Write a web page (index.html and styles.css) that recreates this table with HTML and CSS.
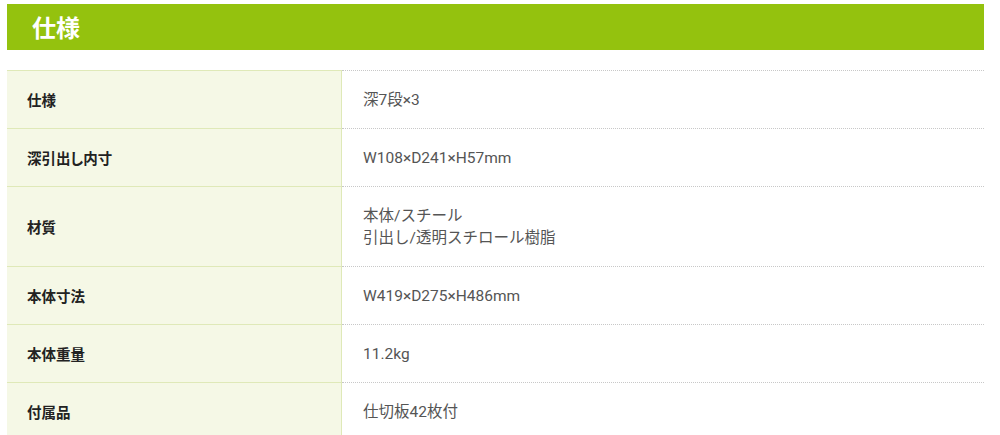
FILE: index.html
```html
<!DOCTYPE html>
<html lang="ja">
<head>
<meta charset="utf-8">
<link rel="stylesheet" href="styles.css">
</head>
<body>
<div class="wrap">
  <h2 class="title">仕様</h2>
  <table class="spec">
    <tr><th>仕様</th><td>深7段×3</td></tr>
    <tr><th>深引出し内寸</th><td>W108×D241×H57mm</td></tr>
    <tr><th>材質</th><td>本体/スチール<br>引出し/透明スチロール樹脂</td></tr>
    <tr><th>本体寸法</th><td>W419×D275×H486mm</td></tr>
    <tr><th>本体重量</th><td>11.2kg</td></tr>
    <tr><th>付属品</th><td>仕切板42枚付</td></tr>
  </table>
</div>
</body>
</html>
```
FILE: styles.css
```css
html, body { margin: 0; padding: 0; background: #fff; }
body { font-family: Roboto, "Noto Sans CJK JP", sans-serif; }
.wrap { padding: 4px 16px 0 7px; }
.title {
  margin: 0;
  height: 46px;
  background: #94c20e;
  color: #fff;
  font-family: "Noto Sans CJK JP", sans-serif;
  font-size: 24px;
  font-weight: 700;
  line-height: 46px;
  padding-left: 25px;
}
.spec {
  margin-top: 20px;
  width: 100%;
  border-collapse: collapse;
}
.spec th, .spec td {
  padding: 18px 20px 17px;
  line-height: 22px;
  vertical-align: middle;
  text-align: left;
}
.spec th {
  width: 294px;
  background: #f5f8e6;
  border-top: 1px solid #dfe9b8;
  border-right: 1px solid #dfe9b8;
  font-family: "Noto Sans CJK JP", sans-serif;
  font-size: 14.5px;
  font-weight: 700;
  color: #222;
  font-feature-settings: "palt";
}
.spec td {
  padding-left: 21px;
  border-top: 1px dotted #c8c8c8;
  font-size: 15.5px;
  color: #555;
}
```
